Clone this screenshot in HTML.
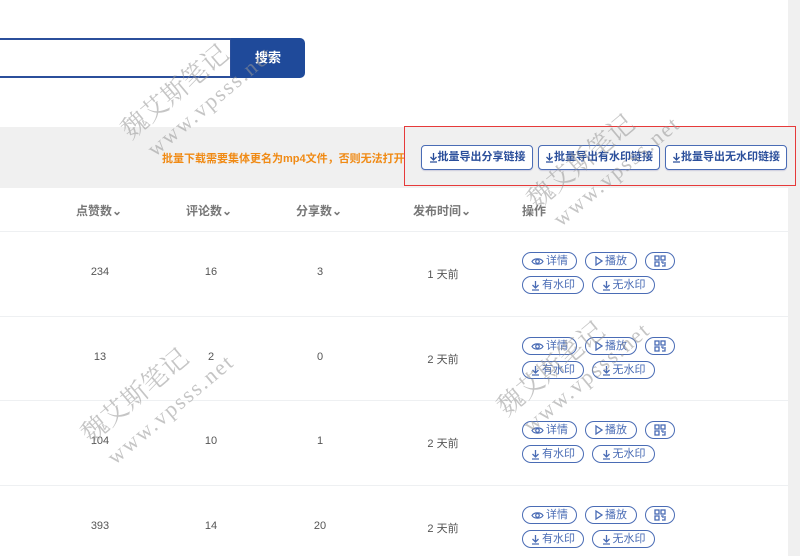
<!DOCTYPE html>
<html><head><meta charset="utf-8"><style>
*{margin:0;padding:0;box-sizing:border-box}
body{width:800px;height:556px;overflow:hidden;background:#fff;font-family:"Liberation Sans","Noto Sans CJK SC",sans-serif;position:relative;color:#555}
.a{position:absolute}
.inp{left:-2px;top:38px;width:234px;height:40px;border:2px solid #2b4f9b}
.sb{left:231px;top:38px;width:74px;height:40px;background:#1f4a9a;border-radius:0 5px 5px 0;color:#fff;font-size:13px;text-align:center;line-height:40px;font-weight:bold}
.band{left:0;top:127px;width:788px;height:61px;background:#f0f0f0}
.scroll{left:788px;top:0;width:12px;height:556px;background:#f0f0f0}
.red{left:404px;top:126px;width:392px;height:60px;border:1px solid #e63a3a}
.tip{left:162px;top:150px;font-size:11px;color:#f08a14;font-weight:bold}
.eb{top:145px;height:25px;border:1px solid #4a6cb5;border-radius:4px;background:#fff;color:#2b4f9b;font-size:11px;line-height:23px;text-align:center;box-shadow:0 1px 1px #ccd;font-weight:bold}
.h{top:202px;font-size:12px;color:#777;font-weight:bold}
.line{left:0;width:788px;height:1px;background:#eef0f2}
.c{font-size:11px;color:#555;width:80px;text-align:center}
.pb{height:18px;border:1.5px solid #4a6cb5;border-radius:9px;color:#4a6cb5;font-size:11px;line-height:15px;text-align:center;background:#fff;display:flex;align-items:center;justify-content:center;gap:2px}
svg{display:inline-block;vertical-align:middle}
.wm{font-family:"Liberation Serif","Noto Serif CJK SC",serif;color:rgba(150,150,150,.55);font-size:26px;transform:rotate(-40deg);transform-origin:left top;white-space:nowrap}
.wm2{font-family:"Liberation Serif",serif;color:rgba(150,150,150,.55);font-size:22px;letter-spacing:2px;transform:rotate(-40deg);transform-origin:left top;white-space:nowrap}
</style></head><body>
<div class="a scroll"></div>
<div class="a inp"></div>
<div class="a sb">搜索</div>
<div class="a band"></div>
<div class="a tip">批量下载需要集体更名为mp4文件，否则无法打开</div>
<div class="a eb" style="left:421px;width:112px"><svg width="9" height="11" viewBox="0 0 9 11"><path d="M4.5 1v7M1.5 5l3 3 3-3M1 10h7" stroke="#2b4f9b" stroke-width="1.3" fill="none"/></svg>批量导出分享链接</div>
<div class="a eb" style="left:538px;width:122px"><svg width="9" height="11" viewBox="0 0 9 11"><path d="M4.5 1v7M1.5 5l3 3 3-3M1 10h7" stroke="#2b4f9b" stroke-width="1.3" fill="none"/></svg>批量导出有水印链接</div>
<div class="a eb" style="left:665px;width:122px"><svg width="9" height="11" viewBox="0 0 9 11"><path d="M4.5 1v7M1.5 5l3 3 3-3M1 10h7" stroke="#2b4f9b" stroke-width="1.3" fill="none"/></svg>批量导出无水印链接</div>
<div class="a red"></div>
<div class="a h" style="left:76px">点赞数⌄</div>
<div class="a h" style="left:186px">评论数⌄</div>
<div class="a h" style="left:296px">分享数⌄</div>
<div class="a h" style="left:413px">发布时间⌄</div>
<div class="a h" style="left:522px">操作</div>
<div class="a line" style="top:231px"></div>
<div class="a line" style="top:316px"></div>
<div class="a line" style="top:400px"></div>
<div class="a line" style="top:485px"></div>

<div class="a c" style="left:60px;top:266px">234</div><div class="a c" style="left:171px;top:266px">16</div><div class="a c" style="left:280px;top:266px">3</div><div class="a c" style="left:403px;top:266px">1 天前</div>
<div class="a c" style="left:60px;top:351px">13</div><div class="a c" style="left:171px;top:351px">2</div><div class="a c" style="left:280px;top:351px">0</div><div class="a c" style="left:403px;top:351px">2 天前</div>
<div class="a c" style="left:60px;top:435px">104</div><div class="a c" style="left:171px;top:435px">10</div><div class="a c" style="left:280px;top:435px">1</div><div class="a c" style="left:403px;top:435px">2 天前</div>
<div class="a c" style="left:60px;top:520px">393</div><div class="a c" style="left:171px;top:520px">14</div><div class="a c" style="left:280px;top:520px">20</div><div class="a c" style="left:403px;top:520px">2 天前</div>

<div id="acts"></div>
<script>
var dl='<svg width="9" height="11" viewBox="0 0 9 11"><path d="M4.5 1v7M1.5 5l3 3 3-3M1 10h7" stroke="#4a6cb5" stroke-width="1.3" fill="none"/></svg>';
var eye='<svg width="13" height="9" viewBox="0 0 13 9"><path d="M1 4.5C3 1 10 1 12 4.5 10 8 3 8 1 4.5z" stroke="#4a6cb5" stroke-width="1.2" fill="none"/><circle cx="6.5" cy="4.5" r="1.8" stroke="#4a6cb5" stroke-width="1.2" fill="none"/></svg>';
var play='<svg width="8" height="10" viewBox="0 0 8 10"><path d="M1 1l6 4-6 4z" stroke="#4a6cb5" stroke-width="1.3" fill="none"/></svg>';
var qr='<svg width="12" height="12" viewBox="0 0 12 12"><g stroke="#4a6cb5" stroke-width="1.3" fill="none"><rect x="1" y="1" width="4" height="4"/><rect x="7" y="1" width="4" height="4"/><rect x="1" y="7" width="4" height="4"/><path d="M7 7h2v2M11 7v4H8"/></g></svg>';
var ys=[252,337,421,506],h='';
ys.forEach(function(y){
h+='<div class="a pb" style="left:522px;top:'+y+'px;width:55px">'+eye+'详情</div>';
h+='<div class="a pb" style="left:585px;top:'+y+'px;width:52px">'+play+'播放</div>';
h+='<div class="a pb" style="left:645px;top:'+y+'px;width:30px">'+qr+'</div>';
h+='<div class="a pb" style="left:522px;top:'+(y+24)+'px;width:62px">'+dl+'有水印</div>';
h+='<div class="a pb" style="left:592px;top:'+(y+24)+'px;width:63px">'+dl+'无水印</div>';
});
document.getElementById('acts').innerHTML=h;
</script>
<div class="a wm" style="left:112px;top:118px">魏艾斯笔记</div>
<div class="a wm2" style="left:142px;top:142px">www.vpsss.net</div>
<div class="a wm" style="left:518px;top:188px">魏艾斯笔记</div>
<div class="a wm2" style="left:548px;top:212px">www.vpsss.net</div>
<div class="a wm" style="left:72px;top:422px">魏艾斯笔记</div>
<div class="a wm2" style="left:102px;top:450px">www.vpsss.net</div>
<div class="a wm" style="left:488px;top:395px">魏艾斯笔记</div>
<div class="a wm2" style="left:518px;top:418px">www.vpsss.net</div>
</body></html>
